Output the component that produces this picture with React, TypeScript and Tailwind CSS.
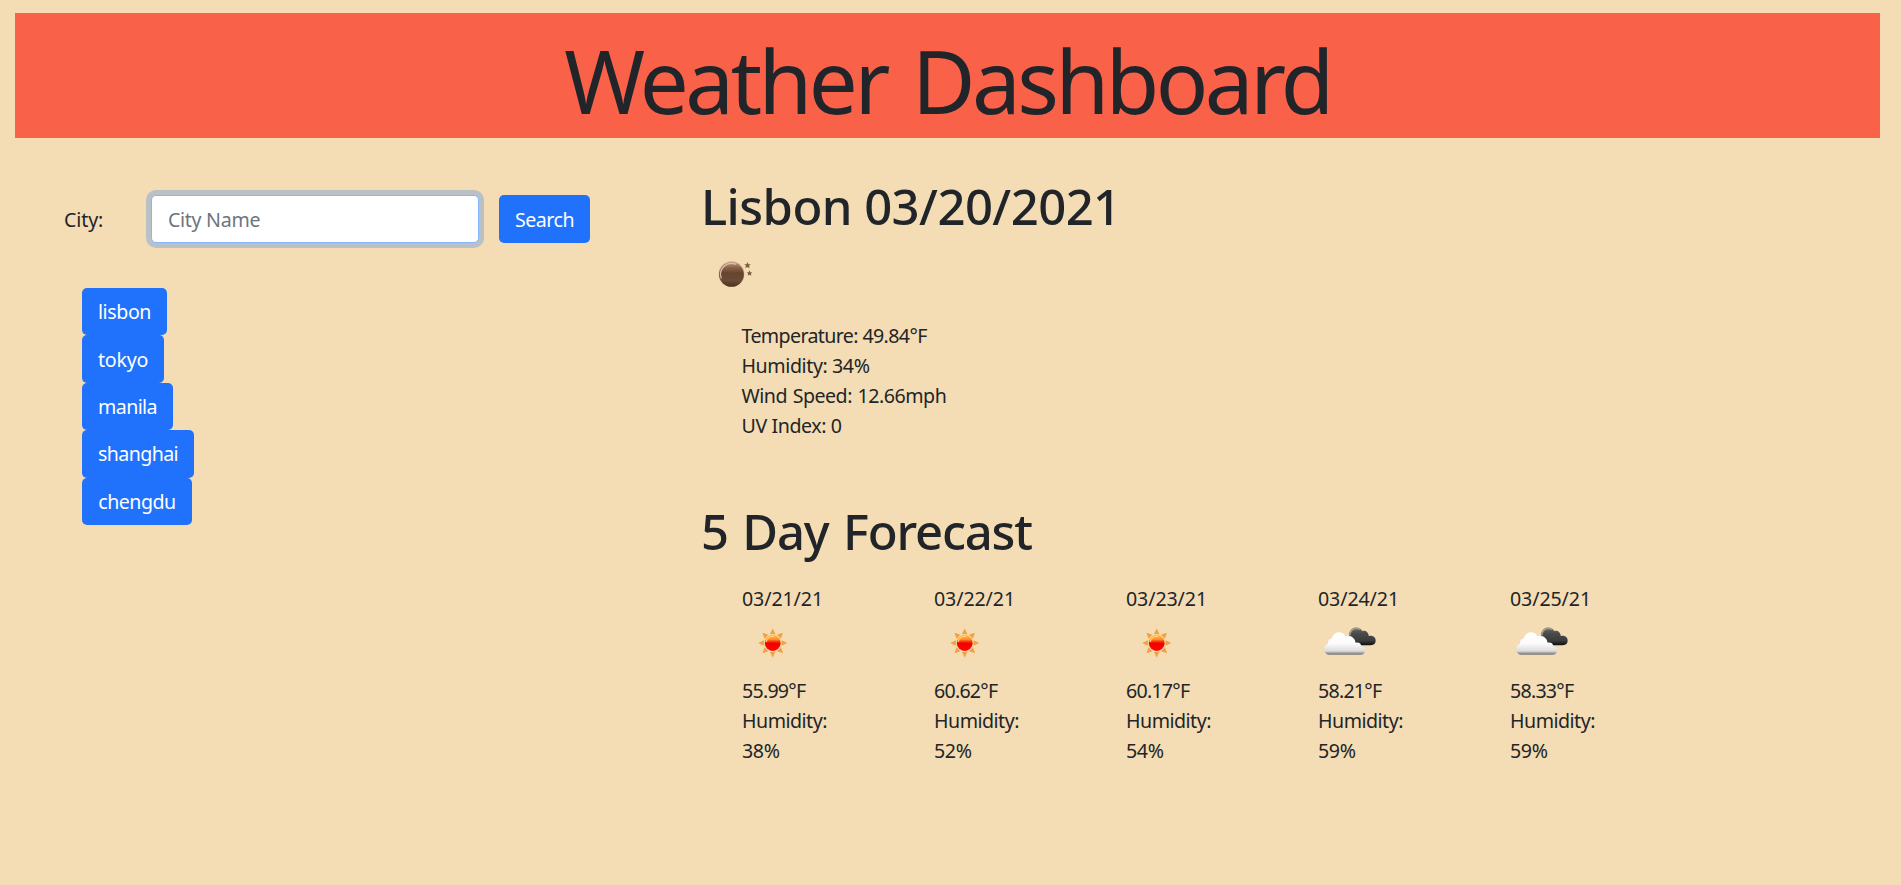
const HISTORY = [
  { name: "lisbon", width: "w-[85px]", tracking: "tracking-[-0.4px]" },
  { name: "tokyo", width: "w-[82px]", tracking: "tracking-[-0.25px]" },
  { name: "manila", width: "w-[91px]", tracking: "tracking-[-0.6px]" },
  { name: "shanghai", width: "w-[112px]", tracking: "tracking-[-0.6px]" },
  { name: "chengdu", width: "w-[110px]", tracking: "tracking-[-0.5px]" },
];

const CURRENT = [
  { text: "Temperature: 49.84°F", tracking: "tracking-[-0.62px]" },
  { text: "Humidity: 34%", tracking: "tracking-[-0.4px]" },
  { text: "Wind Speed: 12.66mph", tracking: "tracking-[-0.48px] [word-spacing:1px]" },
  { text: "UV Index: 0", tracking: "tracking-[-0.4px]" },
];

const FORECAST = [
  { date: "03/21/21", icon: "sun", temp: "55.99°F", humidity: "38%" },
  { date: "03/22/21", icon: "sun", temp: "60.62°F", humidity: "52%" },
  { date: "03/23/21", icon: "sun", temp: "60.17°F", humidity: "54%" },
  { date: "03/24/21", icon: "clouds", temp: "58.21°F", humidity: "59%" },
  { date: "03/25/21", icon: "clouds", temp: "58.33°F", humidity: "59%" },
];

const STAR = "M0-3.2 0.9-1.1 3-1 1.4 0.4 2 2.6 0 1.4-2 2.6-1.4 0.4-3-1-0.9-1.1Z";

function MoonIcon() {
  return (
    <svg className="block h-[62px] w-[62px]" viewBox="0 0 62 62">
      <defs>
        <linearGradient id="moon" x1="0" y1="0" x2="0" y2="1">
          <stop offset="0" stopColor="#c09a82" />
          <stop offset="0.22" stopColor="#8d624b" />
          <stop offset="0.45" stopColor="#65452f" />
          <stop offset="0.75" stopColor="#6b4a36" />
          <stop offset="1" stopColor="#4d3222" />
        </linearGradient>
      </defs>
      <circle cx="27.5" cy="27" r="13" fill="#dcc0a0" />
      <circle cx="27.5" cy="27.4" r="12.4" fill="url(#moon)" />
      <path d="M17.2 31A10.9 10.9 0 0 1 31.5 17.2" fill="none" stroke="#e6cdbb" strokeWidth="1.3" strokeLinecap="round" opacity="0.85" />
      <path d={STAR} transform="translate(43.5 18.4) scale(1.1)" fill="#7d5f40" />
      <path d={STAR} transform="translate(45.5 26.4) scale(0.95)" fill="#7d5f40" />
    </svg>
  );
}

function SunIcon() {
  return (
    <svg className="block h-[62px] w-[62px]" viewBox="0 0 62 62">
      <defs>
        <linearGradient id="sun" x1="0" y1="0" x2="0" y2="1">
          <stop offset="0" stopColor="#ffc14a" />
          <stop offset="0.28" stopColor="#ff8a2a" />
          <stop offset="0.43" stopColor="#f52a08" />
          <stop offset="0.52" stopColor="#f50000" />
          <stop offset="1" stopColor="#fa0505" />
        </linearGradient>
      </defs>
      {[0, 45, 90, 135, 180, 225, 270, 315].map((angle) => (
        <path key={angle} d="M30.7 15.5 33.5 21.2H27.9Z" transform={`rotate(${angle} 30.7 30)`} fill="#f2a040" />
      ))}
      <circle cx="30.7" cy="30" r="8.6" fill="#f8cf96" />
      <circle cx="30.7" cy="30" r="7.9" fill="url(#sun)" />
      <path d="M24.3 28.5A6.6 6.6 0 0 1 31.5 23.6" fill="none" stroke="#ffd772" strokeWidth="1.2" strokeLinecap="round" />
    </svg>
  );
}

function CloudsIcon() {
  return (
    <svg className="block h-[62px] w-[62px]" viewBox="0 0 62 62">
      <defs>
        <linearGradient id="dark-cloud" x1="0" y1="14" x2="0" y2="32" gradientUnits="userSpaceOnUse">
          <stop offset="0" stopColor="#6a6a6a" />
          <stop offset="0.4" stopColor="#484848" />
          <stop offset="0.75" stopColor="#3c3c3c" />
          <stop offset="1" stopColor="#111111" />
        </linearGradient>
        <linearGradient id="light-cloud" x1="0" y1="19" x2="0" y2="42" gradientUnits="userSpaceOnUse">
          <stop offset="0" stopColor="#ffffff" />
          <stop offset="0.5" stopColor="#fbfbfb" />
          <stop offset="0.83" stopColor="#dcdcdc" />
          <stop offset="0.9" stopColor="#a8a8a8" />
          <stop offset="1" stopColor="#6b6b6b" />
        </linearGradient>
      </defs>
      <path
        d="M31 24C30.5 18.5 34 14.6 38 14.6C41 14.6 43 16 44 18C47.5 16.8 50.5 19 50.8 23C54.5 22.2 57.7 24.5 57.7 27.5C57.7 30.3 55.7 32.2 53 32.2H38Z"
        fill="url(#dark-cloud)"
      />
      <path d="M31.7 22.5C31.8 18.5 34.6 15.5 38 15.4C39.7 15.3 41 15.8 42 16.5" fill="none" stroke="#a6a29a" strokeWidth="1.5" />
      <path
        d="M12 41.8C8.5 41.8 6.2 39.3 6.2 36.2C6.2 33.5 7.8 31.5 10 30.9C9.5 28 11.5 25.8 13.8 25.6C14.5 21.8 17.5 19.3 21 19.3C24.2 19.3 26.3 20.8 27.5 23.2C32.5 21.8 37 25 37.6 29.7C41.5 28.8 43.5 31.3 43.2 33.3C45.8 33.5 47.2 35.2 47.2 37.2C47.2 39.9 45.3 41.8 42.5 41.8Z"
        fill="url(#light-cloud)"
      />
    </svg>
  );
}

export default function App() {
  return (
    <div className="min-h-[885px] bg-[#f4dcb4] px-[15px] pt-[13px] font-['Noto_Sans','Open_Sans',sans-serif] text-[19.6px] leading-[30px] font-normal whitespace-nowrap text-[#212529]">
      <header className="mr-[6px] flex h-[125px] justify-center bg-[#fa6149]">
        <h1 className="pt-[7px] text-[87px] leading-[120px] font-normal tracking-[-3.5px] [word-spacing:6px]">Weather Dashboard</h1>
      </header>

      <div className="flex">
        <aside className="w-[689px] pl-[49px]">
          <form className="mt-[57px] flex h-12 items-center">
            <label htmlFor="city" className="w-[87px] pt-[2px] tracking-[-0.1px]">City:</label>
            <input
              id="city"
              type="text"
              placeholder="City Name"
              className="h-12 w-[328px] rounded-[5px] border border-[#86b7fe] bg-white px-4 tracking-[-0.3px] ring-[5px] ring-[#0d6efd]/25 outline-none placeholder:text-[#6c757d]"
            />
            <button type="button" className="ml-5 h-12 w-[91px] rounded-[5px] bg-[#2072fc] pt-px tracking-[-0.5px] text-white">
              Search
            </button>
          </form>
          <div className="mt-[45px] flex flex-col items-start pl-[18px]">
            {HISTORY.map(({ name, width, tracking }) => (
              <button key={name} type="button" className={`h-[47.4px] rounded-[5px] bg-[#2072fc] pt-px text-white ${width} ${tracking}`}>
                {name}
              </button>
            ))}
          </div>
        </aside>

        <main className="pt-[38px]">
          <h2 className="-ml-[3px] text-[49px] leading-[60px] font-medium tracking-[-0.55px]">Lisbon 03/20/2021</h2>
          <div className="mt-[11px]">
            <MoonIcon />
          </div>
          <ul className="mt-[12px] pl-[37.5px]">
            {CURRENT.map(({ text, tracking }) => (
              <li key={text} className={tracking}>{text}</li>
            ))}
          </ul>

          <h2 className="mt-[60px] -ml-[3px] text-[49px] leading-[60px] font-medium tracking-[-1.2px] [word-spacing:3px]">5 Day Forecast</h2>
          <div className="mt-[23px] flex pl-[38px]">
            {FORECAST.map(({ date, icon, temp, humidity }) => (
              <div key={date} className="w-48">
                <p className="tracking-[-0.1px]">{date}</p>
                <div className="-mt-px mb-px">{icon === "sun" ? <SunIcon /> : <CloudsIcon />}</div>
                <p className="tracking-[-0.75px]">{temp}</p>
                <p className="tracking-[-0.5px]">Humidity:</p>
                <p className="tracking-[-0.35px]">{humidity}</p>
              </div>
            ))}
          </div>
        </main>
      </div>
    </div>
  );
}
